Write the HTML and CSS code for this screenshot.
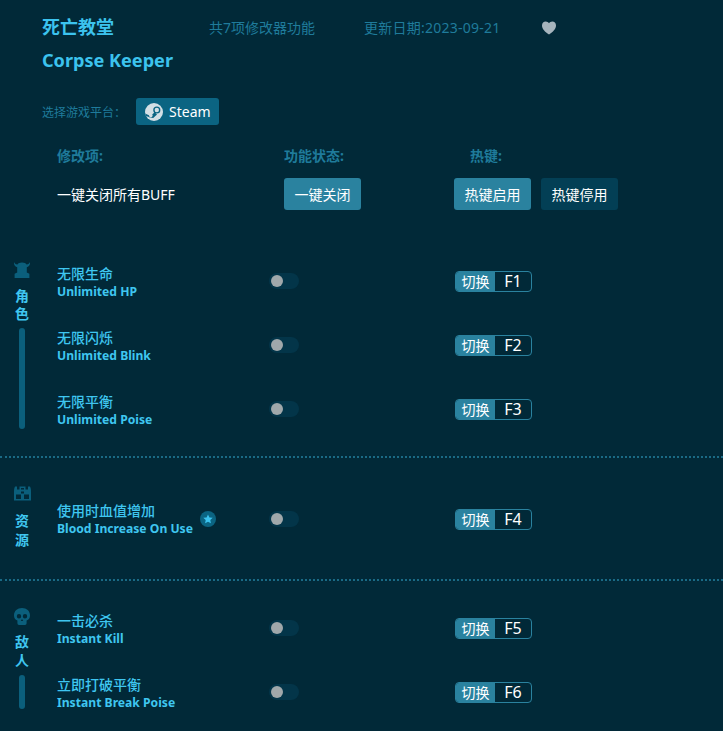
FILE: index.html
```html
<!DOCTYPE html>
<html lang="zh-CN">

<head>
    <meta charset="UTF-8">
    <meta name="viewport" content="width=device-width, initial-scale=1.0">
    <title>死亡教堂 Corpse Keeper</title>
    <link rel="stylesheet" href="styles.css">
</head>

<body>
    <!-- 顶部信息 -->
    <header class="top">
        <div class="title-row">
            <h1 class="title">死亡教堂</h1>
            <span class="stat stat-count">共7项修改器功能</span>
            <span class="stat stat-date">更新日期:2023-09-21</span>
            <svg class="heart" viewBox="0 0 14 14">
                <path d="M7 13.6C3 10.6 0 8 0 4.4 0 2 1.7.4 3.7.4 5.1.4 6.3 1.1 7 2.3 7.7 1.1 8.9.4 10.3.4 12.3.4 14 2 14 4.4 14 8 11 10.6 7 13.6Z" />
            </svg>
        </div>
        <h2 class="title title-en">Corpse Keeper</h2>
        <div class="platform">
            <span class="platform-label">选择游戏平台：</span>
            <button class="btn-steam">
                <svg class="steam-icon" viewBox="0 0 18 18">
                    <circle cx="9" cy="9" r="9" fill="#d3dfe5" />
                    <path d="M0 10.5 5.6 12.9 9.6 9.2 12 11.6 8.2 15 5 14.6 1.2 13Z" fill="#0b6482" />
                    <circle cx="11.8" cy="7" r="3.6" fill="#0b6482" />
                    <circle cx="11.8" cy="7" r="2.2" fill="#d3dfe5" />
                    <circle cx="5.8" cy="12.6" r="1.8" fill="#d3dfe5" />
                </svg>
                Steam
            </button>
        </div>
    </header>

    <!-- 表头 -->
    <div class="table-head">
        <span class="col-a">修改项:</span>
        <span class="col-b">功能状态:</span>
        <span class="col-c">热键:</span>
    </div>
    <div class="master">
        <span class="col-a master-name">一键关闭所有BUFF</span>
        <div class="col-b"><button class="btn">一键关闭</button></div>
        <div class="col-c master-keys">
            <button class="btn">热键启用</button>
            <button class="btn btn-dark">热键停用</button>
        </div>
    </div>

    <!-- 角色 -->
    <section class="group group-role">
        <div class="side">
            <svg class="side-icon" viewBox="0 0 16 17">
                <path d="M0 1C.6 2.6 1.6 3.4 3.4 3.6 4 2.2 5.6 1.4 8 1.4S12 2.2 12.6 3.6C14.4 3.4 15.4 2.6 16 1 16.4 3.8 15 5.8 12.8 6.2V11.4L15.4 12.8V17H.6V12.8L3.2 11.4V6.2C1 5.8-.4 3.8 0 1Z" />
            </svg>
            <div class="side-label">角<br>色</div>
            <div class="side-bar"></div>
        </div>
        <div class="rows">
            <div class="row">
                <div class="names">
                    <div class="name-cn">无限生命</div>
                    <div class="name-en">Unlimited HP</div>
                </div>
                <div class="toggle"><i></i></div>
                <div class="hotkey"><span>切换</span><b>F1</b></div>
            </div>
            <div class="row">
                <div class="names">
                    <div class="name-cn">无限闪烁</div>
                    <div class="name-en">Unlimited Blink</div>
                </div>
                <div class="toggle"><i></i></div>
                <div class="hotkey"><span>切换</span><b>F2</b></div>
            </div>
            <div class="row">
                <div class="names">
                    <div class="name-cn">无限平衡</div>
                    <div class="name-en">Unlimited Poise</div>
                </div>
                <div class="toggle"><i></i></div>
                <div class="hotkey"><span>切换</span><b>F3</b></div>
            </div>
        </div>
    </section>

    <!-- 资源 -->
    <section class="group group-res">
        <div class="side">
            <svg class="side-icon side-icon-wide" viewBox="0 0 17 16">
                <path fill-rule="evenodd" d="M1 1H3V4H5.5V1H11.5V4H14V1H16C17 3 17 5 17 7V15H0V7C0 5 0 3 1 1ZM7 2.4V4H10V2.4ZM2 9V13.4H7V9ZM10 9V13.4H15V9ZM7 6V8H10V6Z" />
            </svg>
            <div class="side-label">资<br>源</div>
        </div>
        <div class="rows">
            <div class="row">
                <div class="names names-star">
                    <div>
                        <div class="name-cn">使用时血值增加</div>
                        <div class="name-en">Blood Increase On Use</div>
                    </div>
                    <span class="star">
                        <svg viewBox="0 0 10 10">
                            <path d="M5 .4 6.4 3.4 9.7 3.8 7.3 6 7.9 9.3 5 7.7 2.1 9.3 2.7 6 .3 3.8 3.6 3.4Z" />
                        </svg>
                    </span>
                </div>
                <div class="toggle"><i></i></div>
                <div class="hotkey"><span>切换</span><b>F4</b></div>
            </div>
        </div>
    </section>

    <!-- 敌人 -->
    <section class="group group-enemy">
        <div class="side">
            <svg class="side-icon" viewBox="0 0 16 17">
                <path fill-rule="evenodd" d="M8 0C12.6 0 16 3 16 7.4 16 10 14.8 11.6 12.6 12.6V15C12.6 16 12 17 11 17H5C4 17 3.4 16 3.4 15V12.6C1.2 11.6 0 10 0 7.4 0 3 3.4 0 8 0ZM5 6A2.2 2.2 0 1 0 5 10.4 2.2 2.2 0 1 0 5 6ZM11 6A2.2 2.2 0 1 0 11 10.4 2.2 2.2 0 1 0 11 6ZM8 11 6.8 13H9.2Z" />
            </svg>
            <div class="side-label">敌<br>人</div>
            <div class="side-bar"></div>
        </div>
        <div class="rows">
            <div class="row">
                <div class="names">
                    <div class="name-cn">一击必杀</div>
                    <div class="name-en">Instant Kill</div>
                </div>
                <div class="toggle"><i></i></div>
                <div class="hotkey"><span>切换</span><b>F5</b></div>
            </div>
            <div class="row">
                <div class="names">
                    <div class="name-cn">立即打破平衡</div>
                    <div class="name-en">Instant Break Poise</div>
                </div>
                <div class="toggle"><i></i></div>
                <div class="hotkey"><span>切换</span><b>F6</b></div>
            </div>
        </div>
    </section>
</body>

</html>
```

FILE: styles.css
```css
* {
    margin: 0;
    padding: 0;
    box-sizing: border-box;
}

body {
    font-family: "Noto Sans", "Noto Sans CJK SC", sans-serif;
    background: #012938;
    color: #3fc6f0;
    height: 731px;
    overflow: hidden;
}

button {
    font-family: inherit;
    border: none;
    color: white;
}

/* 顶部信息 */
.top {
    padding: 14px 0 0 42px;
}

.title-row {
    display: flex;
    align-items: center;
    height: 26px;
}

.title {
    font-size: 18px;
    line-height: 26px;
    font-weight: bold;
    color: #3cc3ee;
}

.title-en {
    margin-top: 7px;
    font-size: 18.1px;
}

.stat {
    font-size: 14px;
    color: #1f7b9b;
}

.stat-count {
    margin-left: 95px;
    width: 155px;
}

.stat-date {
    width: 178px;
    letter-spacing: .25px;
}

.heart {
    width: 14px;
    height: 14px;
    fill: #a6b4bd;
    margin-top: 2px;
}

.platform {
    display: flex;
    align-items: center;
    margin-top: 25px;
}

.platform-label {
    font-size: 12px;
    color: #1f7b9b;
    width: 94px;
}

.btn-steam {
    display: flex;
    align-items: center;
    gap: 6px;
    width: 83px;
    height: 27px;
    padding-left: 9px;
    background: #0b6482;
    border-radius: 3px;
    font-size: 14px;
}

.steam-icon {
    width: 18px;
    height: 18px;
}

/* 表头 */
.table-head,
.master {
    display: flex;
    padding-left: 57px;
}

.table-head {
    margin-top: 19px;
    height: 22px;
    align-items: center;
    font-size: 14px;
    font-weight: bold;
    color: #1f7b9b;
}

.table-head .col-c {
    padding-left: 16px;
}

.col-a {
    width: 227px;
}

.col-b {
    width: 170px;
}

.master {
    margin-top: 12px;
    align-items: center;
    height: 32px;
}

.master-name {
    font-size: 14px;
    color: white;
}

.master-keys {
    display: flex;
    gap: 10px;
}

.btn {
    width: 77px;
    height: 32px;
    background: #2a829f;
    border-radius: 3px;
    font-size: 14px;
}

.btn-dark {
    background: #033f55;
}

/* 分组 */
.group {
    display: flex;
}

.group + .group {
    border-top: 2px dotted #1a6a85;
}

.group-role {
    margin-top: 39px;
    height: 207px;
}

.group-res {
    height: 123px;
}

.group-enemy {
    height: 150px;
}

.side {
    width: 44px;
    display: flex;
    flex-direction: column;
    align-items: center;
}

.group-role .side {
    padding: 12px 0 27px;
}

.group-res .side {
    padding-top: 27px;
}

.group-enemy .side {
    padding-top: 27px;
    height: 128px;
}

.side-icon {
    width: 16px;
    height: 17px;
    fill: #0b5f7c;
    flex: none;
}

.side-icon-wide {
    width: 17px;
}

.side-label {
    margin-top: 9px;
    font-size: 14px;
    line-height: 18px;
    font-weight: bold;
    text-align: center;
}

.group-res .side-label {
    line-height: 19px;
}

.group-enemy .side-label {
    margin-top: 8px;
}

.side-bar {
    flex: 1;
    width: 6px;
    margin-top: 5px;
    background: #0b5f7c;
    border-radius: 3px;
}

.group-enemy .side-bar {
    margin-top: 6px;
}

.rows {
    margin-left: 13px;
}

.group-res .rows {
    padding-top: 29px;
}

.group-enemy .rows {
    padding-top: 15px;
}

.row {
    display: grid;
    grid-template-columns: 212px 186px auto;
    align-items: center;
    height: 64px;
}

.names {
    padding-top: 2px;
}

.names-star {
    display: flex;
    align-items: center;
    gap: 7px;
    padding-top: 0;
}

.name-cn {
    font-size: 14px;
    line-height: 20px;
    font-weight: 500;
}

.name-en {
    font-size: 12.15px;
    line-height: 16px;
    font-weight: bold;
}

.star {
    display: flex;
    align-items: center;
    justify-content: center;
    width: 16px;
    height: 16px;
    border-radius: 50%;
    background: #0b6482;
}

.star svg {
    width: 10px;
    height: 10px;
    fill: #3cc3ee;
}

/* 开关 */
.toggle {
    display: flex;
    align-items: center;
    width: 30px;
    height: 16px;
    padding-left: 2px;
    background: #033549;
    border-radius: 8px;
}

.toggle i {
    width: 12px;
    height: 12px;
    border-radius: 50%;
    background: #a0a8ab;
}

/* 热键 */
.hotkey {
    display: flex;
    width: 77px;
    height: 21px;
    border: 1px solid #2a829f;
    border-radius: 4px;
    overflow: hidden;
    color: white;
    line-height: 19px;
}

.hotkey span {
    width: 39px;
    background: #2a829f;
    font-size: 14px;
    text-align: center;
}

.hotkey b {
    flex: 1;
    font-size: 16px;
    font-weight: normal;
    text-align: center;
}
```
